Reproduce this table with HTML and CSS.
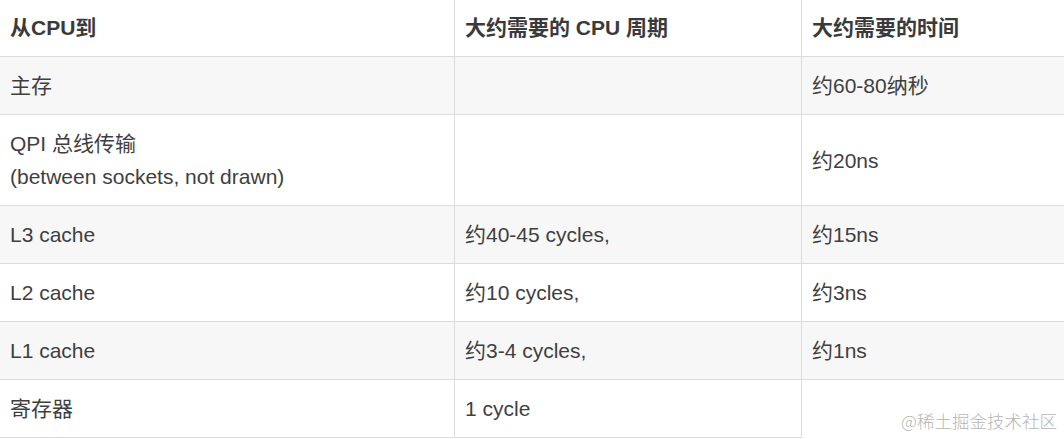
FILE: index.html
```html
<!DOCTYPE html>
<html lang="zh-CN">
<head>
<meta charset="utf-8">
<title>CPU 访问延迟</title>
<link rel="stylesheet" href="styles.css">
</head>
<body>
<table class="latency">
  <colgroup>
    <col class="c1">
    <col class="c2">
    <col class="c3">
  </colgroup>
  <thead>
    <tr>
      <th>从CPU到</th>
      <th>大约需要的 CPU 周期</th>
      <th>大约需要的时间</th>
    </tr>
  </thead>
  <tbody>
    <tr>
      <td>主存</td>
      <td></td>
      <td>约60-80纳秒</td>
    </tr>
    <tr>
      <td>QPI 总线传输<br>(between sockets, not drawn)</td>
      <td></td>
      <td>约20ns</td>
    </tr>
    <tr>
      <td>L3 cache</td>
      <td>约40-45 cycles,</td>
      <td>约15ns</td>
    </tr>
    <tr>
      <td>L2 cache</td>
      <td>约10 cycles,</td>
      <td>约3ns</td>
    </tr>
    <tr>
      <td>L1 cache</td>
      <td>约3-4 cycles,</td>
      <td>约1ns</td>
    </tr>
    <tr>
      <td>寄存器</td>
      <td>1 cycle</td>
      <td class="open"></td>
    </tr>
  </tbody>
</table>
<div class="watermark">@稀土掘金技术社区</div>
</body>
</html>
```

FILE: styles.css
```css
html, body {
  margin: 0;
  padding: 0;
  background: #ffffff;
  overflow: hidden;
}
body {
  width: 1064px;
  height: 439px;
  position: relative;
  font-family: "Liberation Sans", Arial, "Noto Sans CJK SC", sans-serif;
  color: #3f3f3f;
}
.latency {
  border-collapse: collapse;
  table-layout: fixed;
  width: 1066px;
  margin-top: -2px;
  margin-left: -1px;
  font-size: 21px;
  line-height: 33px;
}
.c1 { width: 455px; }
.c2 { width: 347px; }
.c3 { width: 264px; }
.latency th,
.latency td {
  border: 1px solid #dcdcdc;
  padding: 12px 10px;
  text-align: left;
  vertical-align: middle;
}
.latency th {
  font-weight: bold;
  color: #3a3a3a;
  background: #ffffff;
}
.latency tbody tr:nth-child(odd) td {
  background: #f7f7f7;
}
.latency td.open {
  border-bottom: hidden;
}
.watermark {
  position: absolute;
  right: 7px;
  top: 408px;
  font-family: "Noto Sans CJK SC", sans-serif;
  font-size: 17.5px;
  line-height: 26px;
  color: #b5b5b5;
  font-weight: 300;
}
```
